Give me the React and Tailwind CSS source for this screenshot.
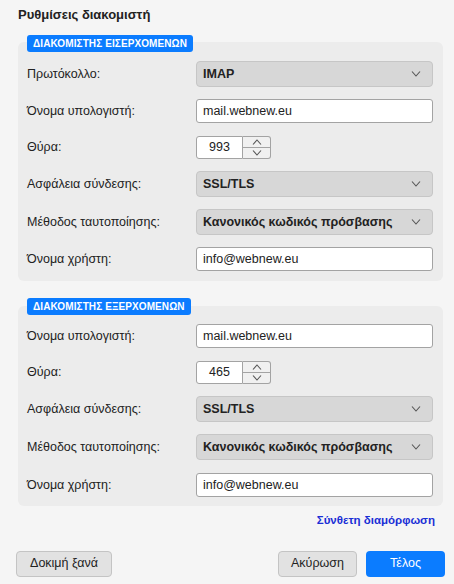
import { useState } from "react";

const font = { fontFamily: '"Liberation Sans", Arial, sans-serif' };

function Chevron({ up = false, className = "" }) {
  return (
    <svg width="10" height="6" viewBox="0 0 10 6" className={className}>
      <path
        d={up ? "M1 5.5 L5 1 L9 5.5" : "M1 0.5 L5 5 L9 0.5"}
        fill="none"
        stroke="#555"
        strokeWidth="1.1"
      />
    </svg>
  );
}

function Row({ label, children }) {
  return (
    <div className="flex items-center">
      <div className="w-[169px] text-[12.5px] leading-[16px] text-[#222]">{label}</div>
      <div className="flex-1">{children}</div>
    </div>
  );
}

function Select({ value }) {
  return (
    <div className="h-[26px] w-full rounded-[4px] border border-[#c6c6c6] bg-[#d7d7d7] flex items-center justify-between pl-[6px] pr-[11px]">
      <span className="text-[12.5px] leading-[16px] font-bold text-[#222]">{value}</span>
      <Chevron />
    </div>
  );
}

function TextInput({ value }) {
  const [v, setV] = useState(value);
  return (
    <input
      value={v}
      onChange={(e) => setV(e.target.value)}
      className="block h-[24px] w-full rounded-[3px] border border-[#a3a3a3] bg-white px-[6px] text-[12.5px] text-[#222] outline-none"
      style={font}
    />
  );
}

function Port({ value }) {
  return (
    <div className="flex h-[23px] w-[75px]">
      <div className="w-[47px] h-full border border-[#a3a3a3] rounded-l-[3px] bg-white flex items-center justify-center text-[12.5px] text-[#222]">
        {value}
      </div>
      <div className="w-[28px] h-full border border-l-0 border-[#a3a3a3] rounded-r-[3px] bg-[#f0f0f0] flex flex-col">
        <div className="flex-1 flex items-center justify-center border-b border-[#a3a3a3]">
          <Chevron up />
        </div>
        <div className="flex-1 flex items-center justify-center">
          <Chevron />
        </div>
      </div>
    </div>
  );
}

function Badge({ children }) {
  return (
    <div className="flex">
      <div className="relative z-10 ml-[9px] flex h-[17px] items-center rounded-[3px] bg-[#0b7cff] px-[6px] text-[10px] font-bold tracking-[0.1px] text-white">
        {children}
      </div>
    </div>
  );
}

export default function App() {
  return (
    <div className="w-[454px] h-[584px] bg-[#f5f5f5] pl-[18px] pr-[11px] pt-[7px]" style={font}>
      <h1 className="text-[13px] font-bold text-[#222] h-[16px] leading-[16px]">
        Ρυθμίσεις διακομιστή
      </h1>

      <div className="mt-[12px] flex flex-col">
        <Badge>ΔΙΑΚΟΜΙΣΤΗΣ ΕΙΣΕΡΧΟΜΕΝΩΝ</Badge>
        <div className="-mt-[10px] rounded-[6px] bg-[#ececec] pl-[9px] pr-[10px] pt-[19px] pb-[10px] flex flex-col gap-[12.3px]">
          <Row label="Πρωτόκολλο:">
            <Select value="IMAP" />
          </Row>
          <Row label="Όνομα υπολογιστή:">
            <TextInput value="mail.webnew.eu" />
          </Row>
          <Row label="Θύρα:">
            <Port value="993" />
          </Row>
          <Row label="Ασφάλεια σύνδεσης:">
            <Select value="SSL/TLS" />
          </Row>
          <Row label="Μέθοδος ταυτοποίησης:">
            <Select value="Κανονικός κωδικός πρόσβασης" />
          </Row>
          <Row label="Όνομα χρήστη:">
            <TextInput value="info@webnew.eu" />
          </Row>
        </div>
      </div>

      <div className="mt-[17px] flex flex-col">
        <Badge>ΔΙΑΚΟΜΙΣΤΗΣ ΕΞΕΡΧΟΜΕΝΩΝ</Badge>
        <div className="-mt-[9px] rounded-[6px] bg-[#ececec] pl-[9px] pr-[10px] pt-[18px] pb-[9px] flex flex-col gap-[12.3px]">
          <Row label="Όνομα υπολογιστή:">
            <TextInput value="mail.webnew.eu" />
          </Row>
          <Row label="Θύρα:">
            <Port value="465" />
          </Row>
          <Row label="Ασφάλεια σύνδεσης:">
            <Select value="SSL/TLS" />
          </Row>
          <Row label="Μέθοδος ταυτοποίησης:">
            <Select value="Κανονικός κωδικός πρόσβασης" />
          </Row>
          <Row label="Όνομα χρήστη:">
            <TextInput value="info@webnew.eu" />
          </Row>
        </div>
      </div>

      <div className="mt-[7px] flex justify-end pr-[8px]">
        <a href="#" className="text-[11.5px] leading-[14px] font-bold text-[#1a2fd6]">
          Σύνθετη διαμόρφωση
        </a>
      </div>

      <div className="mt-[24px] -mx-[2px] flex items-center">
        <button className="h-[26px] w-[96px] rounded-[4px] border border-[#c4c4c4] bg-[#e2e2e2] text-[12.5px] text-[#222]">
          Δοκιμή ξανά
        </button>
        <div className="flex-1" />
        <button className="h-[26px] w-[79px] rounded-[4px] border border-[#c4c4c4] bg-[#e2e2e2] text-[12.5px] text-[#222]">
          Ακύρωση
        </button>
        <button className="ml-[9px] h-[26px] w-[79px] rounded-[4px] bg-[#0b7cff] text-[12.5px] text-white">
          Τέλος
        </button>
      </div>
    </div>
  );
}
